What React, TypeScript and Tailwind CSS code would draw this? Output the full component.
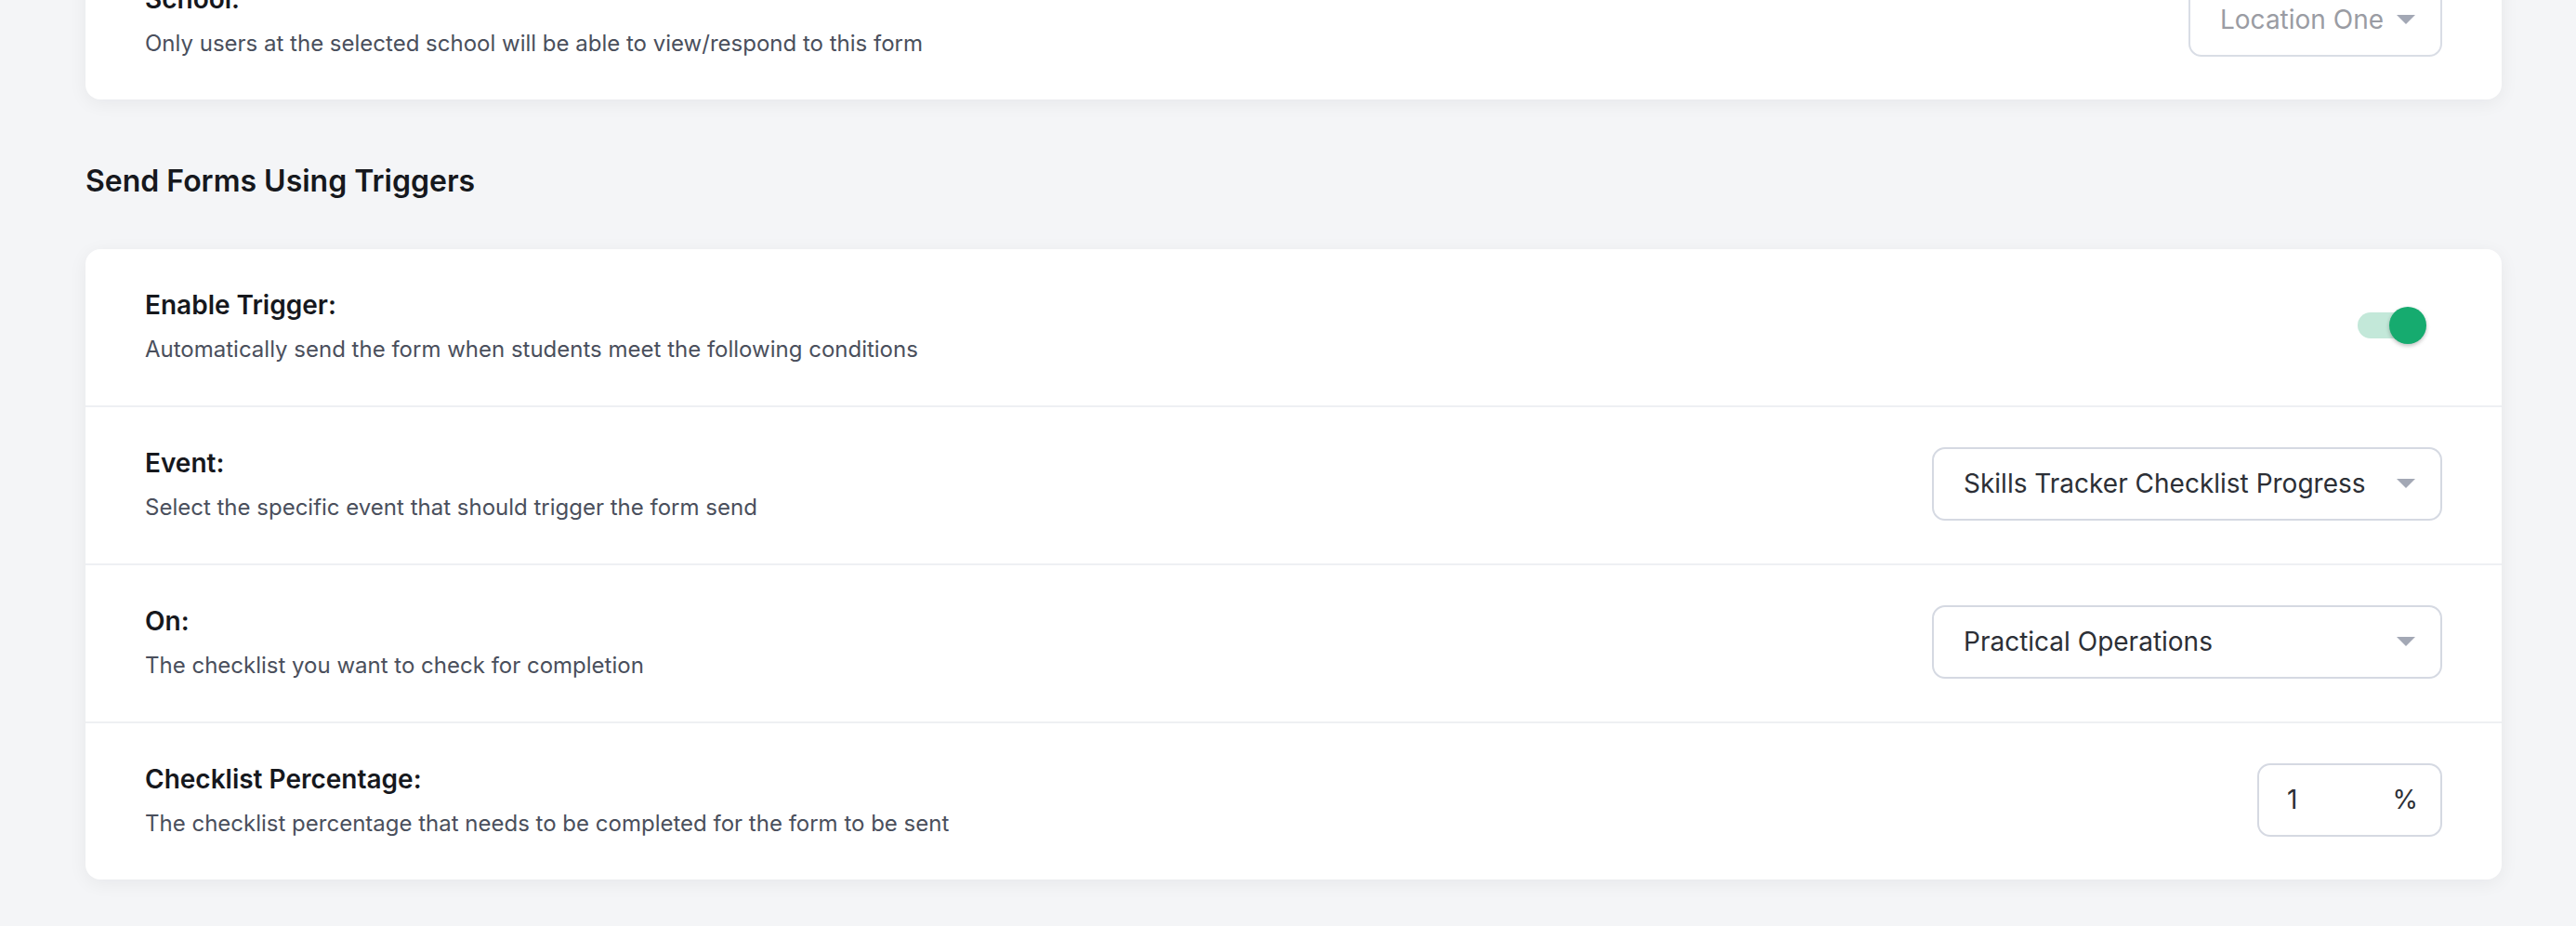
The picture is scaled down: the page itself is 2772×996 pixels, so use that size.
import React from 'react';

interface RowProps {
    label: string;
    description: string;
    children?: React.ReactNode;
    last?: boolean;
}

function Row({ label, description, children, last }: RowProps) {
    return (
        <div className={`flex items-center justify-between px-[64px] pt-[40px] pb-[44px] ${last ? '' : 'border-b-2 border-[#eef0f3]'}`}>
            <div className="flex flex-col">
                <span className="text-[28px] leading-[40px] font-semibold text-[#16181d]">{label}</span>
                <span className="mt-[12px] text-[24px] leading-[32px] text-[#4a4f5c]">{description}</span>
            </div>
            {children}
        </div>
    );
}

function Caret() {
    return (
        <svg width="20" height="10" viewBox="0 0 20 10" className="shrink-0">
            <polygon points="0,0 20,0 10,10" fill="#a3a8b5" />
        </svg>
    );
}

function Select({ value, width, disabled }: { value: string; width: string; disabled?: boolean }) {
    return (
        <div
            className={`flex items-center justify-between h-[79px] rounded-[14px] border-2 bg-white pl-[32px] pr-[27px] ${width} ${
                disabled ? 'border-[#d9dde5] text-[#9a9ca3]' : 'border-[#d5d9e2] text-[#2c2f36]'
            }`}
        >
            <span className="text-[28px] leading-[40px] whitespace-nowrap">{value}</span>
            <Caret />
        </div>
    );
}

function Toggle() {
    // switch is on
    return (
        <div className="relative w-[74px] h-[40px] mr-[17px]">
            <div className="absolute left-0 top-[6px] w-[68px] h-[28px] rounded-full bg-[#c3e8d9]"></div>
            <div className="absolute right-0 top-0 w-[40px] h-[40px] rounded-full bg-[#16ab6f] shadow-[0_2px_4px_rgba(0,0,0,0.25)]"></div>
        </div>
    );
}

export default function App() {
    return (
        <div className="flex flex-col h-[996px] overflow-hidden bg-[#f4f5f7] pl-[92px] pr-[80px] font-['Inter',sans-serif]">
            <div className="-mt-[61px] rounded-2xl bg-white shadow-[0_4px_20px_rgba(17,24,39,0.06)]">
                <Row
                    label="School:"
                    description="Only users at the selected school will be able to view/respond to this form"
                    last
                >
                    <Select value="Location One" width="w-[273px]" disabled />
                </Row>
            </div>

            <h2 className="mt-[64px] mb-[49px] text-[32px] leading-[48px] font-semibold text-[#16181d]">
                Send Forms Using Triggers
            </h2>

            <div className="rounded-2xl bg-white shadow-[0_4px_20px_rgba(17,24,39,0.06)]">
                <Row
                    label="Enable Trigger:"
                    description="Automatically send the form when students meet the following conditions"
                >
                    <Toggle />
                </Row>
                <Row label="Event:" description="Select the specific event that should trigger the form send">
                    <Select value="Skills Tracker Checklist Progress" width="w-[549px]" />
                </Row>
                <Row label="On:" description="The checklist you want to check for completion">
                    <Select value="Practical Operations" width="w-[549px]" />
                </Row>
                <Row
                    label="Checklist Percentage:"
                    description="The checklist percentage that needs to be completed for the form to be sent"
                    last
                >
                    <div className="flex items-center justify-between w-[199px] h-[79px] rounded-[14px] border-2 border-[#d5d9e2] bg-white pl-[30px] pr-[24px] text-[28px] leading-[40px] text-[#2c2f36]">
                        <span>1</span>
                        <span>%</span>
                    </div>
                </Row>
            </div>
        </div>
    );
}
